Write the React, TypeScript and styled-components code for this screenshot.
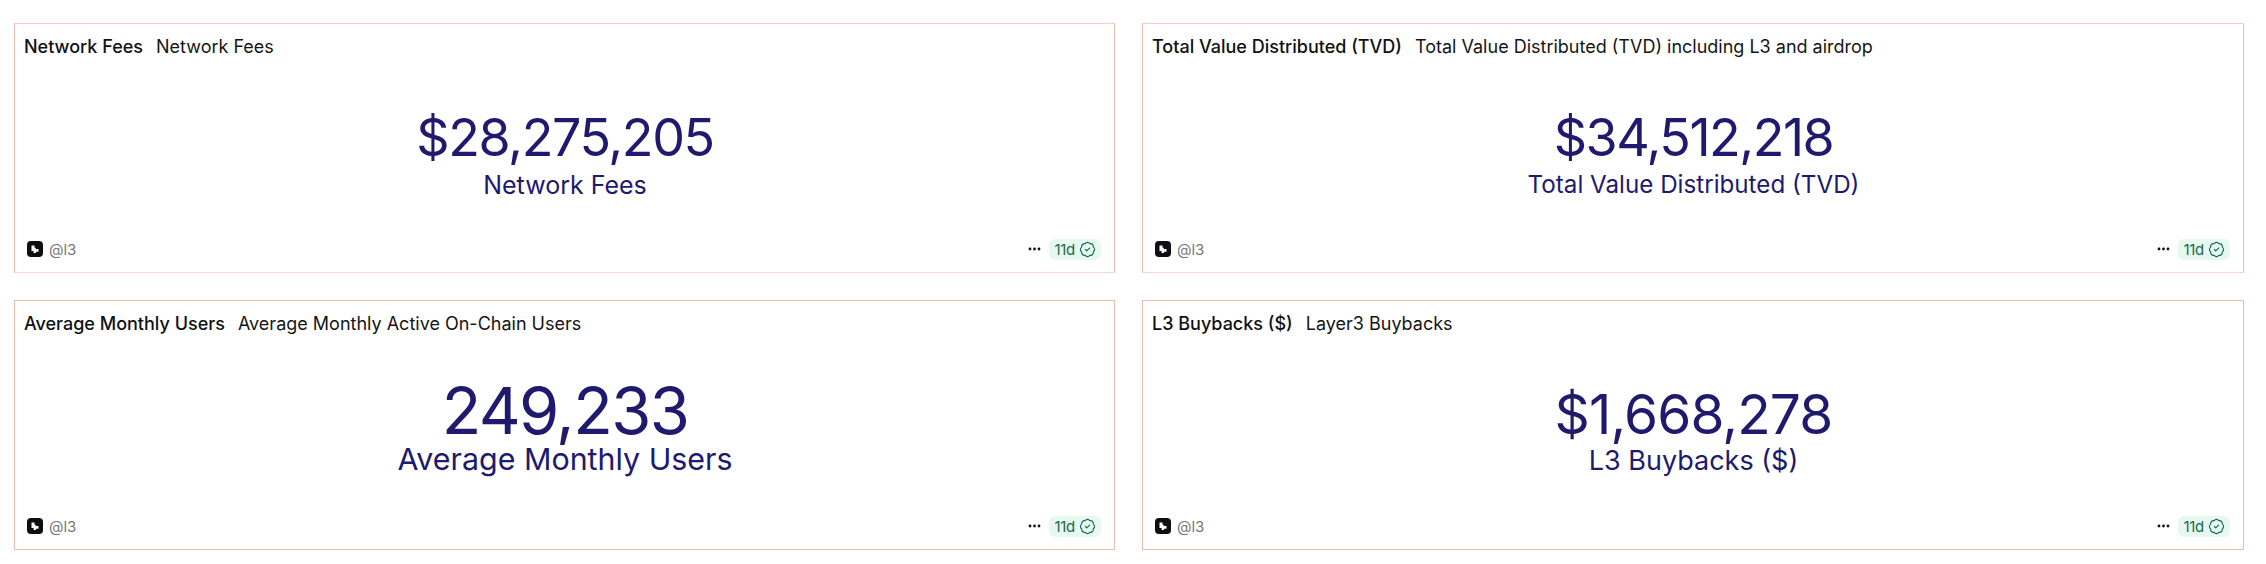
import React from "react";
import styled, { createGlobalStyle } from "styled-components";

const Global = createGlobalStyle`
  html, body { margin: 0; padding: 0; background: #fff; }
  body { font-family: Inter, "Liberation Sans", sans-serif; }
`;

const Board = styled.div`
  display: grid;
  grid-template-columns: 1101px 1102px;
  grid-auto-rows: 250px;
  column-gap: 27px;
  row-gap: 27px;
  padding: 23px 0 0 14px;
`;

const Card = styled.section`
  box-sizing: border-box;
  display: flex;
  flex-direction: column;
  border: 1.5px solid #ecbcae;
  background: #fff;
  padding: 0 13px 0 8px;

  &:nth-child(-n + 2) {
    border-top-color: #f2cdc7;
    border-bottom-color: #fad6d4;
  }
`;

const Header = styled.header`
  display: flex;
  align-items: center;
  gap: 13px;
  height: 46px;
  padding-left: 1px;
  font-size: 18px;
  line-height: 24px;
  white-space: nowrap;
`;

const Title = styled.span`
  font-weight: 500;
  color: #111;
`;

const Subtitle = styled.span`
  font-weight: 400;
  color: #151515;
`;

const Body = styled.div<{ $top: number }>`
  flex: 1;
  display: flex;
  flex-direction: column;
  align-items: center;
  justify-content: center;
  color: #201a6e;
  padding: ${(p) => p.$top}px 0 0 6px;
`;

const Value = styled.div<{ $size: number; $track: number }>`
  font-size: ${(p) => p.$size}px;
  line-height: ${(p) => p.$size}px;
  letter-spacing: ${(p) => p.$track}px;
  font-weight: 400;
`;

const Label = styled.div<{ $size: number; $gap: number }>`
  font-size: ${(p) => p.$size}px;
  line-height: ${(p) => p.$size}px;
  margin-top: ${(p) => p.$gap}px;
  font-weight: 400;
`;

const Footer = styled.footer`
  display: flex;
  align-items: center;
  justify-content: space-between;
  height: 46px;
  padding-left: 4px;
`;

const Owner = styled.div`
  display: flex;
  align-items: center;
  gap: 6px;
  font-size: 15px;
  color: #777;
`;

const Actions = styled.div`
  display: flex;
  align-items: center;
  gap: 8px;
`;

const Badge = styled.div`
  display: flex;
  align-items: center;
  gap: 4px;
  height: 21px;
  padding: 0 5px 0 6px;
  border-radius: 6px;
  background: #e6f8f0;
  color: #166a4a;
  font-size: 15px;
  letter-spacing: -0.3px;
`;

const Logo = () => (
  <svg width="16" height="16" viewBox="0 0 16 16" aria-hidden="true">
    <rect width="16" height="16" rx="4" fill="#0e0e10" />
    <path d="M4.5 4.5h3v2.2h1.2v1.4h2.8v2.6H9v1.3H6.6v-2H4.5z" fill="#fff" />
  </svg>
);

const Dots = () => (
  <svg width="13" height="4" viewBox="0 0 13 4" aria-hidden="true">
    <circle cx="2" cy="2" r="1.4" fill="#111" />
    <circle cx="6.5" cy="2" r="1.4" fill="#111" />
    <circle cx="11" cy="2" r="1.4" fill="#111" />
  </svg>
);

const Verified = () => (
  <svg width="17" height="17" viewBox="0 0 24 24" fill="none" stroke="#166a4a" strokeWidth="1.6" strokeLinecap="round" strokeLinejoin="round" aria-hidden="true">
    <path d="M3.85 8.62a4 4 0 0 1 4.78-4.77 4 4 0 0 1 6.74 0 4 4 0 0 1 4.78 4.78 4 4 0 0 1 0 6.74 4 4 0 0 1-4.77 4.78 4 4 0 0 1-6.75 0 4 4 0 0 1-4.78-4.77 4 4 0 0 1 0-6.76Z" />
    <path d="m9 12 2 2 4-4" />
  </svg>
);

const cards = [
  { title: "Network Fees", sub: "Network Fees", value: "$28,275,205", label: "Network Fees", vs: 52, vt: -1.4, ls: 25, gap: 9, top: 13 },
  { title: "Total Value Distributed (TVD)", sub: "Total Value Distributed (TVD) including L3 and airdrop", value: "$34,512,218", label: "Total Value Distributed (TVD)", vs: 52, vt: -1.5, ls: 24.2, gap: 9, top: 13 },
  { title: "Average Monthly Users", sub: "Average Monthly Active On-Chain Users", value: "249,233", label: "Average Monthly Users", vs: 65, vt: -1.6, ls: 30.4, gap: 1, top: 3 },
  { title: "L3 Buybacks ($)", sub: "Layer3 Buybacks", value: "$1,668,278", label: "L3 Buybacks ($)", vs: 55, vt: -0.9, ls: 27, gap: 5, top: 10 },
];

export default function App() {
  return (
    <>
      <Global />
      <Board>
        {cards.map((c) => (
          <Card key={c.title}>
            <Header>
              <Title>{c.title}</Title>
              <Subtitle>{c.sub}</Subtitle>
            </Header>
            <Body $top={c.top}>
              <Value $size={c.vs} $track={c.vt}>{c.value}</Value>
              <Label $size={c.ls} $gap={c.gap}>{c.label}</Label>
            </Body>
            <Footer>
              <Owner>
                <Logo />
                @l3
              </Owner>
              <Actions>
                <Dots />
                <Badge>
                  11d
                  <Verified />
                </Badge>
              </Actions>
            </Footer>
          </Card>
        ))}
      </Board>
    </>
  );
}
